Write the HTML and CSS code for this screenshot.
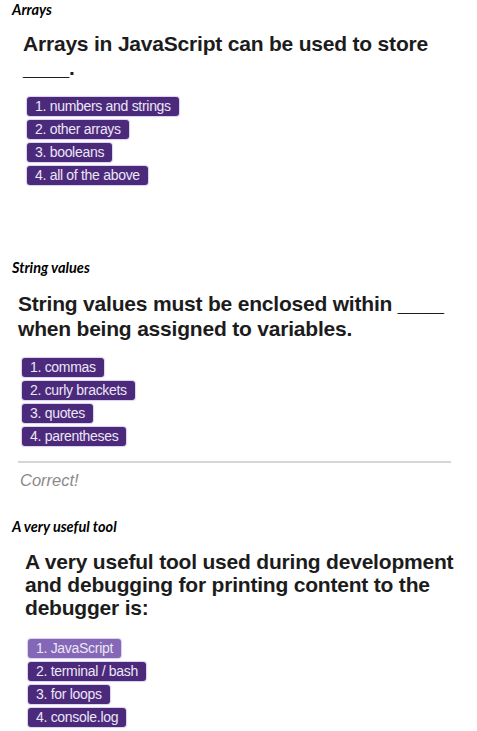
FILE: index.html
```html
<!DOCTYPE html>
<html>
<head>
<meta charset="utf-8">
<link rel="stylesheet" href="styles.css">
</head>
<body>
<section class="block block-arrays">
  <div class="label">Arrays</div>
  <div class="quiz">
    <h2 class="question">Arrays in JavaScript can be used to store<br>____.</h2>
    <div class="choices">
      <button class="choice">1. numbers and strings</button>
      <button class="choice">2. other arrays</button>
      <button class="choice">3. booleans</button>
      <button class="choice">4. all of the above</button>
    </div>
  </div>
</section>

<section class="block block-strings">
  <div class="label">String values</div>
  <div class="quiz">
    <h2 class="question">String values must be enclosed within ____<br>when being assigned to variables.</h2>
    <div class="choices">
      <button class="choice">1. commas</button>
      <button class="choice">2. curly brackets</button>
      <button class="choice">3. quotes</button>
      <button class="choice">4. parentheses</button>
    </div>
    <div class="result">Correct!</div>
  </div>
</section>

<section class="block block-tool">
  <div class="label">A very useful tool</div>
  <div class="quiz">
    <h2 class="question">A very useful tool used during development<br>and debugging for printing content to the<br>debugger is:</h2>
    <div class="choices">
      <button class="choice choice-hover">1. JavaScript</button>
      <button class="choice">2. terminal / bash</button>
      <button class="choice">3. for loops</button>
      <button class="choice">4. console.log</button>
    </div>
  </div>
</section>
</body>
</html>
```

FILE: styles.css
```css
* { box-sizing: border-box; }

html, body {
  margin: 0;
  padding: 0;
  background: #ffffff;
}

body {
  width: 477px;
  height: 731px;
  overflow: hidden;
  font-family: "Liberation Sans", Arial, sans-serif;
  color: #1f1f1f;
}

.block {
  display: flex;
  flex-direction: column;
}

.label {
  font-family: Lato, "Noto Sans", sans-serif;
  font-style: italic;
  font-weight: 700;
  font-size: 14.5px;
  line-height: 16px;
  color: #000;
  padding-left: 12px;
}

.question {
  margin: 0;
  font-weight: 700;
  font-size: 21px;
  line-height: 24px;
  color: #1c1c1c;
  letter-spacing: -0.2px;
}

.choices {
  display: flex;
  flex-direction: column;
  align-items: flex-start;
  gap: 4px;
  margin-top: 17px;
  margin-left: 4px;
}

.choice {
  display: block;
  height: 19px;
  padding: 0 8px;
  border: none;
  border-radius: 3px;
  background: #4b2a7c;
  color: #ece6f5;
  font-family: "Liberation Sans", Arial, sans-serif;
  font-size: 14px;
  line-height: 19px;
  letter-spacing: -0.3px;
  white-space: nowrap;
  box-shadow: 0 0 1px 1px rgba(150, 120, 200, 0.35);
}

.choice-hover {
  background: #8467b6;
}

/* Arrays block */
.block-arrays {
  padding-top: 2px;
}
.block-arrays .quiz {
  padding: 14px 0 0 23px;
}

/* String values block */
.block-strings {
  padding-top: 75px;
}
.block-strings .quiz {
  padding: 15px 0 0 18px;
}
.block-strings .question {
  line-height: 25px;
}
.result {
  margin-top: 15px;
  width: 433px;
  border-top: 2px solid #d6d6d6;
  padding: 8px 0 0 2px;
  font-size: 16.5px;
  line-height: 18px;
  font-style: italic;
  color: #8a8a8a;
}

/* Tool block */
.block-tool {
  padding-top: 30px;
}
.block-tool .quiz {
  padding: 15px 0 0 25px;
}
.block-tool .question {
  line-height: 23px;
}
.block-tool .choices {
  margin: 20px 0 0 3px;
}
```
